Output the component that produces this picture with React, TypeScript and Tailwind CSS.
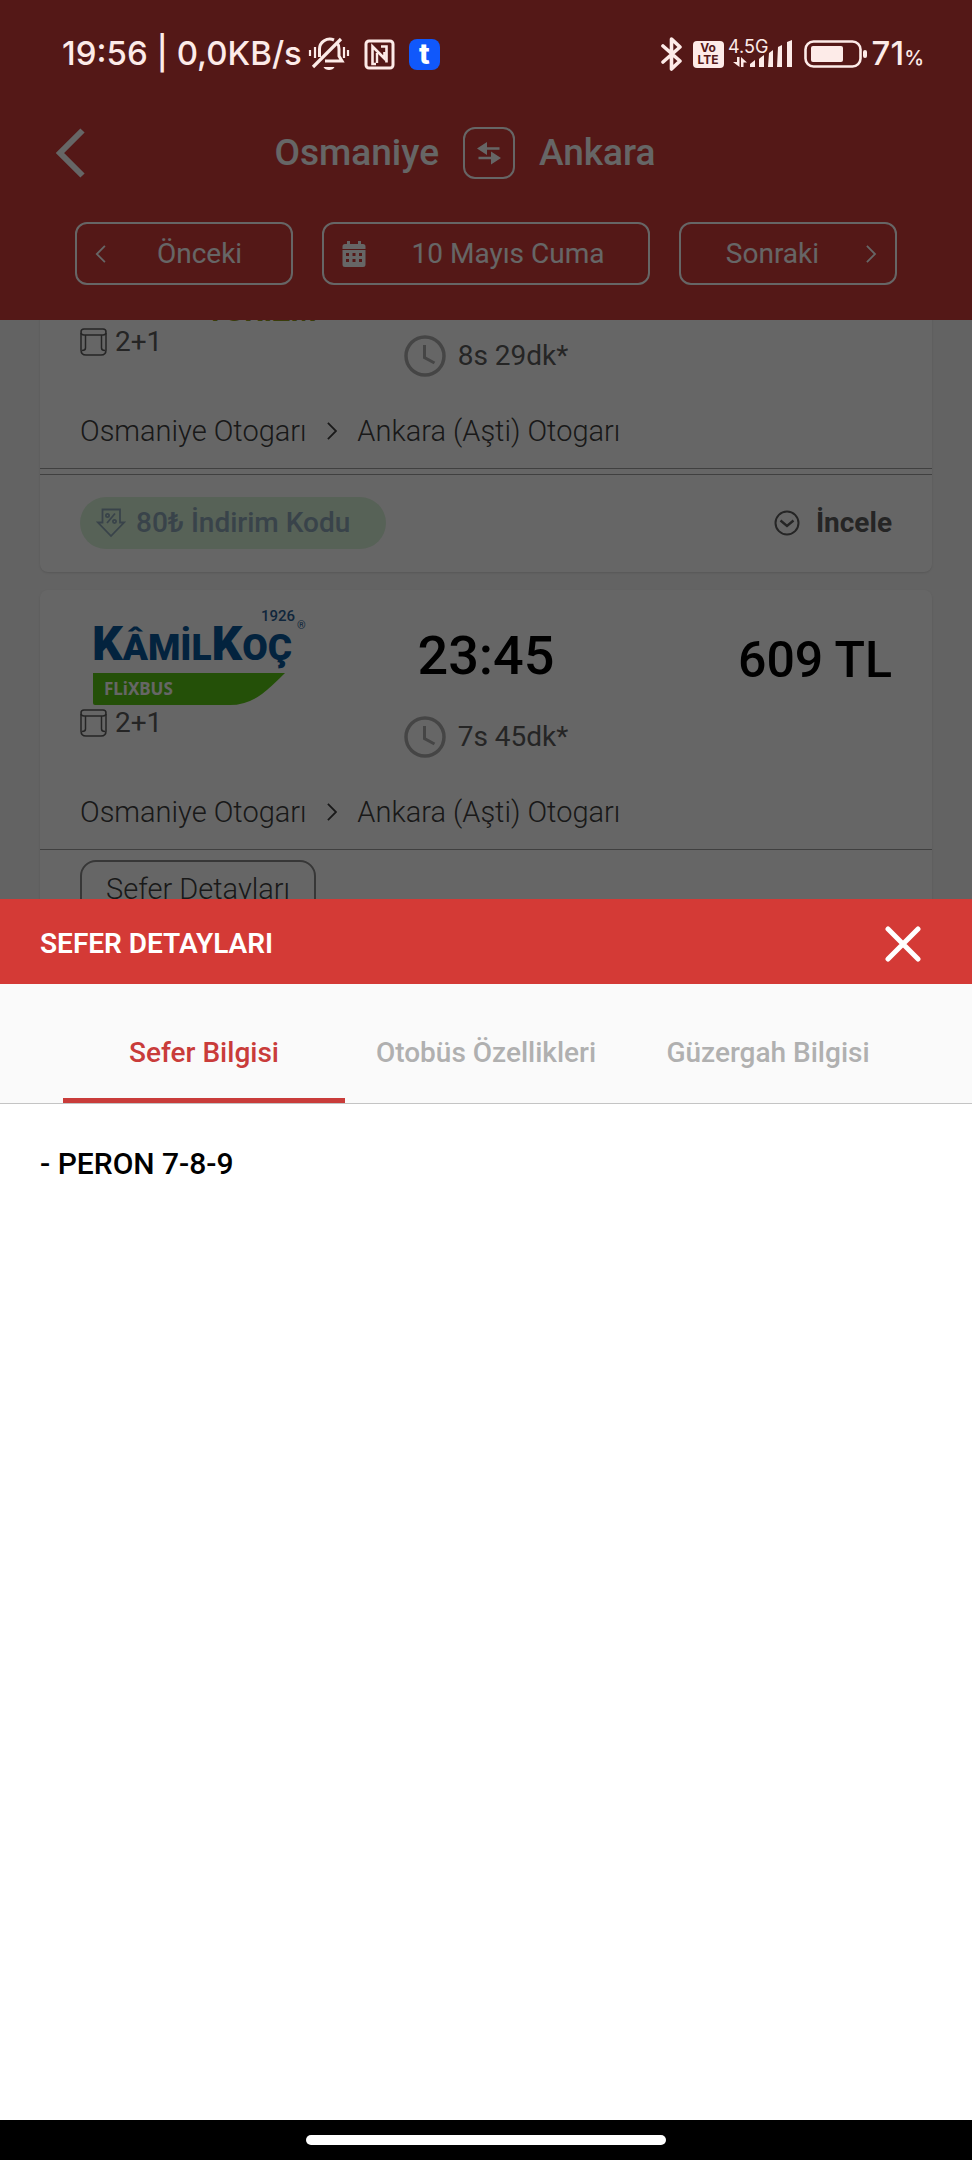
import React, { useState } from "react";

const BellOffIcon = () => (
    <svg width="42" height="36" viewBox="0 0 42 36" fill="none" stroke="currentColor" strokeWidth="3" aria-hidden="true">
        <path d="M17 25 H34 L31 20 V13 C31 10 30.500 8.500 29.500 7.500" />
        <path d="M26 4 C19 1 11.500 6 11.500 13 V21" />
        <path d="M5 31 L33 3" strokeWidth="3.200" />
        <path d="M15.500 31 H26.500 C25 35 17 35 15.500 31 Z" fill="currentColor" stroke="none" />
        <path d="M2 14 V20 M7 11 V22 M36 11 V22 M40 14 V20" strokeWidth="2.200" />
    </svg>
);

const NfcIcon = () => (
    <svg width="31" height="31" viewBox="0 0 31 31" fill="none" stroke="currentColor" strokeWidth="3" aria-hidden="true">
        <rect x="2" y="2" width="27" height="27" rx="3" />
        <path d="M12 25 H8.500 V7.500 L20.500 19.500 V13" strokeWidth="2.600" />
        <path d="M17 7.500 H22.500 V23.500" strokeWidth="2.600" />
        <path d="M13 14 V24" strokeWidth="2.400" />
    </svg>
);

const BluetoothIcon = () => (
    <svg width="22" height="36" viewBox="0 0 22 36" fill="none" stroke="currentColor" strokeWidth="3.600" strokeLinejoin="round" strokeLinecap="round" aria-hidden="true">
        <path d="M2 10 L19 25 L10.500 33 V3 L19 11 L2 26" />
    </svg>
);

const SignalIcon = () => (
    <svg width="66" height="32" viewBox="0 0 66 32" fill="currentColor" className="overflow-visible" aria-hidden="true">
        <text x="0" y="15" fontSize="18" fontFamily="Inter, sans-serif">4.5G</text>
        <path d="M9 19 H11.500 V29 L5 24 H9 Z M13 19 L19 24.500 H15.500 V29 H13 Z" />
        <path d="M22 29 V26 L27 22 V29 Z M32 20 L36 17 V29 H31 V21 Z" />
        <path d="M41 15 L45 12 V29 H40 Z M50 9 L54 7 V29 H49 Z M59 4 L64 2 V29 H59 Z" />
    </svg>
);

const BatteryIcon = () => (
    <svg width="64" height="28" viewBox="0 0 64 28" aria-hidden="true">
        <rect x="1.500" y="1.500" width="55" height="25" rx="8" fill="none" stroke="currentColor" strokeWidth="2.600" />
        <rect x="7" y="6" width="32" height="16" rx="2" fill="currentColor" />
        <rect x="59" y="10" width="4" height="8" rx="2" fill="currentColor" />
    </svg>
);

const SwapIcon = () => (
    <svg width="26" height="24" viewBox="0 0 26 24" fill="currentColor" aria-hidden="true">
        <path d="M1 7.500 L11 1 V14 Z M11 6.300 H23.500 V8.700 H11 Z" />
        <path d="M25 17 L15 10.500 V23.500 Z M15 15.800 H2.500 V18.200 H15 Z" />
    </svg>
);

const CalendarIcon = () => (
    <svg width="24" height="26" viewBox="0 0 24 26" fill="currentColor" aria-hidden="true">
        <path d="M5 0 H8 V3 H16 V0 H19 V3 H21 Q23.500 3 23.500 5.500 V8 H0.500 V5.500 Q0.500 3 3 3 H5 Z" />
        <path fillRule="evenodd" d="M0.500 9 H23.500 V23.500 Q23.500 26 21 26 H3 Q0.500 26 0.500 23.500 Z M4 12 V15 H7 V12 Z M10.500 12 V15 H13.500 V12 Z M17 12 V15 H20 V12 Z M4 18 V21 H7 V18 Z M10.500 18 V21 H13.500 V18 Z M17 18 V21 H20 V18 Z" />
    </svg>
);

interface ChevronProps {
    direction: "left" | "right";
    size?: number;
    strokeWidth?: number;
}

const Chevron: React.FC<ChevronProps> = ({ direction, size = 18, strokeWidth = 2 }) => (
    <svg width={size * 0.6} height={size} viewBox="0 0 12 20" fill="none" stroke="currentColor" strokeWidth={strokeWidth} aria-hidden="true">
        <path d={direction === "left" ? "M11 1 L2 10 L11 19" : "M1 1 L10 10 L1 19"} />
    </svg>
);

const SeatIcon = () => (
    <svg width="27" height="28" viewBox="0 0 27 28" fill="none" stroke="currentColor" strokeWidth="1.500" aria-hidden="true">
        <rect x="1" y="1" width="25" height="6" rx="3" />
        <path d="M1 5 V22 Q1 27 6 27 H21 Q26 27 26 22 V5" />
        <path d="M5.500 7 V20 Q5.500 22.500 2 22.500 M21.500 7 V20 Q21.500 22.500 25 22.500" />
    </svg>
);

const ClockIcon = () => (
    <svg width="42" height="42" viewBox="0 0 42 42" fill="none" stroke="#adadad" strokeWidth="3.500" aria-hidden="true">
        <circle cx="21" cy="21" r="19" />
        <path d="M20.500 10 V22.500 L30.500 28" strokeWidth="3" />
    </svg>
);

const DiscountIcon = () => (
    <svg width="30" height="30" viewBox="0 0 30 30" fill="none" stroke="currentColor" strokeWidth="1.800" aria-hidden="true">
        <path d="M6.500 1.500 H24 V14.500 H28 L15 28 L2 14.500 H6.500 Z" />
        <path d="M19 5.500 L11 15" />
        <circle cx="11.500" cy="7.500" r="1.600" />
        <circle cx="18.500" cy="13.500" r="1.600" />
    </svg>
);

const ExpandIcon = () => (
    <svg width="26" height="26" viewBox="0 0 26 26" fill="none" stroke="currentColor" strokeWidth="2" aria-hidden="true">
        <circle cx="13" cy="13" r="11.500" />
        <path d="M6.500 10.500 L13 16 L19.500 10.500" strokeWidth="2.400" />
    </svg>
);

const KamilKocLogo = () => (
    <svg width="220" height="106" viewBox="0 0 220 106" role="img" aria-label="Kâmil Koç Flixbus" fontFamily="Roboto, sans-serif">
        <text x="0" y="58" fontSize="48" fill="#08589c" fontWeight="900">K<tspan fontSize="37">ÂMİL</tspan>K<tspan fontSize="37">OÇ</tspan></text>
        <text x="169" y="19" fontSize="15" fontWeight="500" fill="#2a5f96">1926</text>
        <text x="205" y="27" fontSize="11" fill="#2a5f96">®</text>
        <path d="M1 71 H193 Q178 86 170 92 Q155 103 138 103 H3 Q1 103 1 101 Z" fill="#5ac814" />
        <text x="12" y="93" fontSize="17" fontWeight="700" fill="#fff" fontFamily="'Noto Sans', sans-serif">FLiXBUS</text>
    </svg>
);

interface TripCardProps {
    logo: React.ReactNode;
    time?: string;
    duration: string;
    price?: string;
    children: React.ReactNode;
}

const TripCard: React.FC<TripCardProps> = ({ logo, time, duration, price, children }) => {
    return <article className="rounded-lg bg-white shadow">
        <div className="px-10 pb-[17px] border-b border-[#a0a0a0] text-[28px] text-[#5c5c5c]">
            <div className="grid grid-cols-[1fr_auto_1fr]">
                <div>
                    <div className="h-[119px] pt-3 pl-3">{logo}</div>
                    <div className="flex items-center gap-2 h-7">
                        <SeatIcon />
                        <span>2+1</span>
                    </div>
                </div>
                <div className="flex flex-col items-center pt-9">
                    <div className="h-[60px] text-[54px] leading-[60px] font-medium text-black">{time}</div>
                    <div className="flex items-center gap-3 mt-[30px]">
                        <ClockIcon />
                        <span>{duration}</span>
                    </div>
                </div>
                <div className="pt-10 text-right text-[50px] leading-[60px] font-medium text-black">{price}</div>
            </div>
            <div className="flex items-center mt-[34px] text-[29px] leading-10 font-light text-[#404040]">
                <span>Osmaniye Otogarı</span>
                <span className="px-5"><Chevron direction="right" /></span>
                <span>Ankara (Aşti) Otogarı</span>
            </div>
        </div>
        {children}
    </article>
}

const StatusBar = () => {
    return <div className="relative z-10 flex items-center justify-between h-[108px] pl-[62px] pr-12 text-[#fdebe8] font-['Inter']">
        <div className="flex items-center">
            <span className="mr-1.5 text-[33px] font-medium">19:56 | 0,0KB/s</span>
            <BellOffIcon />
            <span className="mx-3.5"><NfcIcon /></span>
            <span className="flex items-center justify-center w-[31px] h-[31px] rounded-lg bg-[#1058fb] text-white text-[28px] leading-[31px] font-extrabold">t</span>
        </div>
        <div className="flex items-center">
            <BluetoothIcon />
            <span className="flex flex-col items-center justify-center w-[31px] h-[27px] ml-2.5 mr-1 rounded bg-[#fdebe8] text-[#541818] text-[12px] leading-3 font-bold">
                <span>Vo</span>
                <span>LTE</span>
            </span>
            <SignalIcon />
            <span className="ml-2.5 mr-1"><BatteryIcon /></span>
            <span className="text-[33px] font-medium">71<span className="text-[20px]">%</span></span>
        </div>
    </div>
}

const dateButton = "flex items-center h-[63px] px-[18px] border-2 border-white rounded-xl text-[28px]";

const Header = () => {
    return <header className="bg-[#d23c3a] text-white pb-[35px]">
        <StatusBar />
        <div className="grid grid-cols-[1fr_52px_1fr] gap-6 items-center h-[90px] pl-[55px] pr-[49px] text-[37px] font-medium">
            <div className="flex items-center justify-between">
                <button aria-label="Geri"><Chevron direction="left" size={50} strokeWidth={2.4} /></button>
                <span>Osmaniye</span>
            </div>
            <button aria-label="Yön değiştir" className="flex items-center justify-center h-[52px] border-2 border-white rounded-xl">
                <SwapIcon />
            </button>
            <span>Ankara</span>
        </div>
        <div className="grid grid-cols-[2fr_3fr_2fr] gap-[29px] px-[75px] mt-6">
            <button className={dateButton}>
                <Chevron direction="left" />
                <span className="flex-1 pl-5">Önceki</span>
            </button>
            <button className={dateButton}>
                <CalendarIcon />
                <span className="flex-1 pl-5">10 Mayıs Cuma</span>
            </button>
            <button className={dateButton}>
                <span className="flex-1 pr-5">Sonraki</span>
                <Chevron direction="right" />
            </button>
        </div>
    </header>
}

const tabs = ["Sefer Bilgisi", "Otobüs Özellikleri", "Güzergah Bilgisi"];

const DetailSheet = () => {
    const [active, setActive] = useState(0);

    return <section className="relative flex flex-col flex-1 bg-white">
        <div className="flex items-center justify-between h-[85px] pt-1 pl-10 pr-[51px] bg-[#d43a36] text-white">
            <h2 className="text-[28px] font-semibold">SEFER DETAYLARI</h2>
            <button aria-label="Kapat">
                <svg width="36" height="36" viewBox="0 0 36 36" stroke="currentColor" strokeWidth="5" strokeLinecap="round" aria-hidden="true">
                    <path d="M3 3 L33 33 M33 3 L3 33" />
                </svg>
            </button>
        </div>
        <div role="tablist" className="grid grid-cols-3 px-[63px] bg-[#fafafa] border-b border-[#c4c4c4] text-[28px] font-medium">
            {tabs.map((tab, i) => (
                <button
                    key={tab}
                    role="tab"
                    aria-selected={active === i}
                    onClick={() => setActive(i)}
                    className={`h-[119px] pt-6 border-b-[5px] whitespace-nowrap ${active === i ? "border-[#c93c3a] text-[#c93c3a]" : "border-transparent text-[#b0b0b0]"}`}
                >
                    {tab}
                </button>
            ))}
        </div>
        <div role="tabpanel" className="flex-1 px-10 pt-10 text-[30px] leading-10 font-medium text-black">
            {active === 0 && "- PERON 7-8-9"}
        </div>
        <div className="flex items-center justify-center h-10 bg-black">
            <div className="w-[37%] h-2.5 rounded-full bg-white"></div>
        </div>
    </section>
}

const App = () => {
    return <div className="flex flex-col min-h-screen font-['Roboto',sans-serif]">
        <div className="relative">
            <Header />
            <main className="flex flex-col gap-[18px] h-[579px] px-10 overflow-hidden bg-[#f8f8f8]">
                <div className="-mt-[111px]">
                    <TripCard
                        logo={<div className="pt-[72px] pl-[114px] text-[30px] leading-[36px] font-bold text-[#8f9a1a]">TURİZM</div>}
                        duration="8s 29dk*"
                    >
                        <div className="flex items-center justify-between mt-[5px] px-10 pt-[22px] pb-[23px] border-t border-[#a0a0a0] text-[28px]">
                            <span className="flex items-center gap-2.5 h-[52px] pl-4 pr-9 rounded-full bg-[#daf4da] text-[#8ea9b8] font-medium">
                                <DiscountIcon />
                                80₺ İndirim Kodu
                            </span>
                            <button className="flex items-center gap-4 font-bold text-[#5c5c5c]">
                                <ExpandIcon />
                                İncele
                            </button>
                        </div>
                    </TripCard>
                </div>
                <TripCard logo={<KamilKocLogo />} time="23:45" duration="7s 45dk*" price="609 TL">
                    <div className="px-10 py-2.5 text-[29px] font-light text-[#404040]">
                        <button className="h-[60px] px-6 border-2 border-[#8a8a8a] rounded-2xl">Sefer Detayları</button>
                    </div>
                </TripCard>
            </main>
            <div className="absolute inset-0 bg-black/60"></div>
        </div>
        <DetailSheet />
    </div>
}

export default App;
